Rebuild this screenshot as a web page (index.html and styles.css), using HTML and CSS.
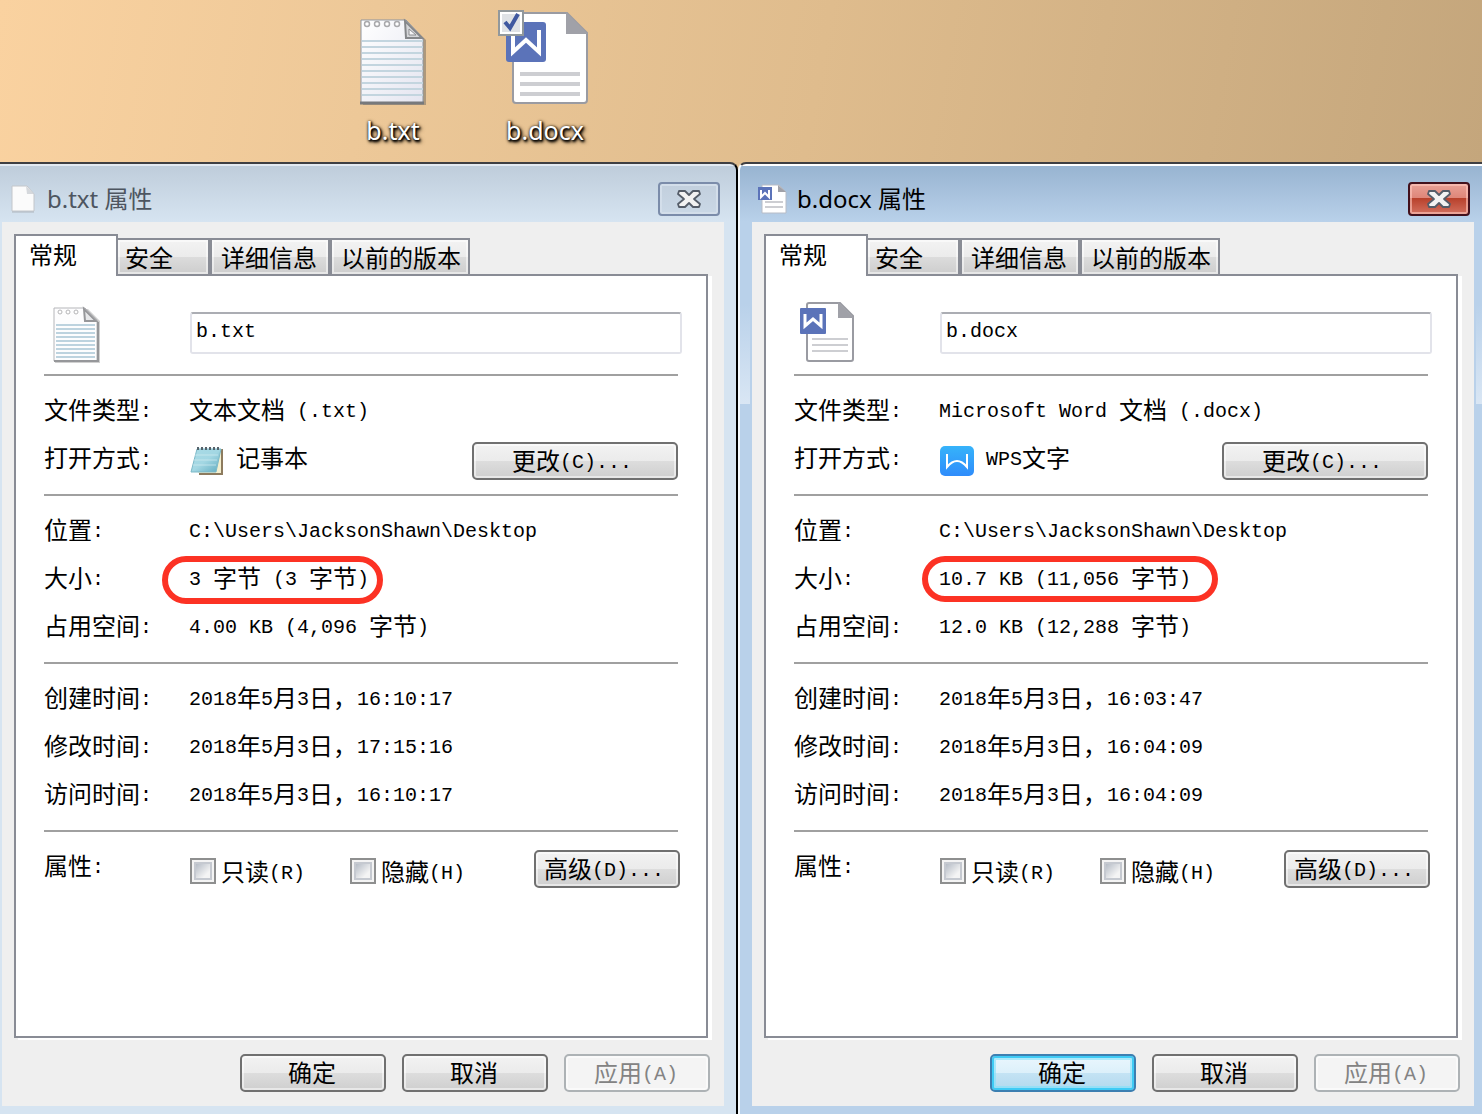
FILE: index.html
```html
<!DOCTYPE html>
<html lang="zh-CN">
<head>
<meta charset="utf-8">
<title>文件属性</title>
<link rel="stylesheet" href="styles.css">
</head>
<body>
<svg class="defs" aria-hidden="true">
  <defs>
    <linearGradient id="paper" x1="0" y1="0" x2="1" y2="1">
      <stop offset="0" stop-color="#ffffff"/><stop offset="1" stop-color="#e4e5f0"/>
    </linearGradient>
    <linearGradient id="pad" x1="0" y1="0" x2="1" y2="1">
      <stop offset="0" stop-color="#a9dbe6"/><stop offset="0.5" stop-color="#a3d7e3"/><stop offset="1" stop-color="#5fabbf"/>
    </linearGradient>
    <linearGradient id="wps" x1="0" y1="0" x2="0" y2="1">
      <stop offset="0" stop-color="#36b3fa"/><stop offset="1" stop-color="#2f8cfb"/>
    </linearGradient>
    <symbol id="close" viewBox="0 0 26 20">
      <path d="M3 2h6l4 4 4-4h6l1 3-6 5 6 5-1 3h-6l-4-4-4 4H3l-1-3 6-5-6-5z" fill="#f2f2f2" stroke="#545c68" stroke-width="1.800" stroke-linejoin="round"/>
    </symbol>
  </defs>
</svg>

<header class="desktop">
  <div class="file">
    <svg width="66" height="88" viewBox="0 0 66 88">
      <path d="M3 4h44l19 18v65H3z" fill="#6f6a62" opacity=".5"/>
      <path d="M1 2h45l17 18v65H1z" fill="url(#paper)" stroke="#8f959e" stroke-width="1"/>
      <path d="M2 23h61M2 29h61M2 35h61M2 41h61M2 47h61M2 53h61M2 59h61M2 65h61M2 71h61M2 77h61" stroke="#c3d5df" stroke-width="2"/>
      <path d="M0 85h64" stroke="#77797c" stroke-width="3"/>
      <path d="M45 3l17 17H46z" fill="#d5d6d9" stroke="#85878a" stroke-width="2"/>
      <path d="M49 11v6h7z" fill="#f5f5f7" stroke="#8c8d90" stroke-width="1"/>
      <g fill="#fff" stroke="#a9a9ac" stroke-width="1.500"><circle cx="7" cy="6" r="2.500"/><circle cx="17" cy="6" r="2.500"/><circle cx="27" cy="6" r="2.500"/><circle cx="37" cy="6" r="2.500"/></g>
    </svg>
    <span class="file-name">b.txt</span>
  </div>
  <div class="file">
    <svg width="94" height="96" viewBox="0 0 94 96">
      <path d="M18 3h51l20 20v67q0 3-3 3H18q-3 0-3-3V6q0-3 3-3z" fill="#fff" stroke="#9a9ba2" stroke-width="2"/>
      <path d="M68 2l22 22H68z" fill="#a0a1a8"/>
      <path d="M22 64h60M22 74h60M22 84h60" stroke="#cdced2" stroke-width="4"/>
      <rect x="8" y="12" width="40" height="40" rx="3" fill="#5b73b9"/>
      <path d="M15 24v18l13-12 13 12V20" fill="none" stroke="#fff" stroke-width="4"/>
      <rect x="1" y="1" width="24" height="24" fill="#fff" stroke="#91989c" stroke-width="2"/>
      <rect x="4" y="4" width="18" height="18" fill="#dfe2e6"/>
      <path d="M7 12l5 6 8-14" fill="none" stroke="#3f58a0" stroke-width="4"/>
    </svg>
    <span class="file-name">b.docx</span>
  </div>
</header>

<main class="windows">
  <section class="window inactive" aria-labelledby="t1">
    <header class="titlebar">
      <svg class="title-icon" width="30" height="30" viewBox="0 0 30 30">
        <path d="M5 2h15l7 8v17H5z" fill="#fbfbfb" stroke="#c3c6ca" stroke-width="1"/>
        <path d="M5 28h22" stroke="#aeb5bd"/>
        <path d="M19 2l8 8h-7z" fill="#d5d8dc"/>
      </svg>
      <h2 id="t1">b.txt 属性</h2>
      <button class="close" type="button" aria-label="关闭"><svg width="26" height="20"><use href="#close"/></svg></button>
    </header>
    <div class="client">
      <div class="tabs" role="tablist">
        <button class="tab t-general active" role="tab" aria-selected="true">常规</button>
        <button class="tab t-security" role="tab">安全</button>
        <button class="tab t-detail" role="tab">详细信息</button>
        <button class="tab t-previous" role="tab">以前的版本</button>
      </div>
      <div class="panel" role="tabpanel">
        <div class="head">
          <div class="head-icon">
            <svg width="62" height="64" viewBox="0 0 62 64">
              <path d="M11 9h33l12 12v42H11z" fill="#777" opacity=".35"/>
              <path d="M10 8h31l12 12v41H10z" fill="#fdfdfe" stroke="#b5b6b9" stroke-width="1"/>
              <path d="M12 25h39M12 29h39M12 33h39M12 37h39M12 41h39M12 45h39M12 49h39M12 53h39M12 57h39" stroke="#bdd3df" stroke-width="2"/>
              <path d="M10 61h44V22" fill="none" stroke="#96979a" stroke-width="2"/>
              <path d="M40 9l12 12H41z" fill="#e6e7e9" stroke="#96979a" stroke-width="2"/>
              <g fill="#fff" stroke="#b5b5b8"><circle cx="16" cy="12" r="2"/><circle cx="24" cy="12" r="2"/><circle cx="32" cy="12" r="2"/></g>
            </svg>
          </div>
          <input class="name" type="text" value="b.txt" aria-label="文件名">
        </div>
        <dl>
          <div class="row"><dt>文件类型<i>:</i></dt><dd>文本文档<i> (.txt)</i></dd></div>
          <div class="row"><dt>打开方式<i>:</i></dt>
            <dd class="app">
              <svg width="34" height="30" viewBox="0 0 34 30">
                <path d="M9 3h24v26H9z" fill="#8d7b5e"/><path d="M8 3h23v24H8z" fill="#f4efcf"/>
                <path d="M7 3h24l-5 23H1z" fill="url(#pad)" stroke="#7db9c8"/>
                <path d="M5 9h23M4 14h23M3 19h23" stroke="#d3edf2" stroke-width="1" opacity=".7"/>
                <path d="M8 1v3M12 1v3M16 1v3M20 1v3M24 1v3M28 1v3" stroke="#53626b" stroke-width="2"/>
              </svg>
              <span>记事本</span>
              <button class="btn change" type="button">更改<i>(C)...</i></button>
            </dd></div>
        </dl>
        <dl>
          <div class="row"><dt>位置<i>:</i></dt><dd><i>C:\Users\JacksonShawn\Desktop</i></dd></div>
          <div class="row"><dt>大小<i>:</i></dt><dd><span class="ringed ring-short"><i>3 </i>字节<i> (3 </i>字节<i>)</i></span></dd></div>
          <div class="row"><dt>占用空间<i>:</i></dt><dd><i>4.00 KB (4,096 </i>字节<i>)</i></dd></div>
        </dl>
        <dl>
          <div class="row"><dt>创建时间<i>:</i></dt><dd><i>2018</i>年<i>5</i>月<i>3</i>日，<i>16:10:17</i></dd></div>
          <div class="row"><dt>修改时间<i>:</i></dt><dd><i>2018</i>年<i>5</i>月<i>3</i>日，<i>17:15:16</i></dd></div>
          <div class="row"><dt>访问时间<i>:</i></dt><dd><i>2018</i>年<i>5</i>月<i>3</i>日，<i>16:10:17</i></dd></div>
        </dl>
        <dl>
          <div class="row"><dt>属性<i>:</i></dt>
            <dd class="attributes">
              <label><input type="checkbox"><span>只读<i>(R)</i></span></label>
              <label><input type="checkbox"><span>隐藏<i>(H)</i></span></label>
              <button class="btn advanced" type="button">高级<i>(D)...</i></button>
            </dd></div>
        </dl>
      </div>
      <footer class="actions">
        <button class="btn" type="button">确定</button>
        <button class="btn" type="button">取消</button>
        <button class="btn" type="button" disabled>应用<i>(A)</i></button>
      </footer>
    </div>
  </section>

  <section class="window focused" aria-labelledby="t2">
    <header class="titlebar">
      <svg class="title-icon" width="30" height="30" viewBox="0 0 30 30">
        <path d="M5 1h17l7 7v21H5z" fill="#fff" stroke="#b7bcc6" stroke-width="1"/>
        <path d="M21 1l8 7h-8z" fill="#a0a1a8"/>
        <path d="M8 18h18M8 23h18" stroke="#cdced2" stroke-width="2"/>
        <rect x="1" y="3" width="14" height="13" fill="#5b73b9"/>
        <path d="M4 6v7l4-4 4 4V6" fill="none" stroke="#fff" stroke-width="2"/>
      </svg>
      <h2 id="t2">b.docx 属性</h2>
      <button class="close" type="button" aria-label="关闭"><svg width="26" height="20"><use href="#close"/></svg></button>
    </header>
    <div class="client">
      <div class="tabs" role="tablist">
        <button class="tab t-general active" role="tab" aria-selected="true">常规</button>
        <button class="tab t-security" role="tab">安全</button>
        <button class="tab t-detail" role="tab">详细信息</button>
        <button class="tab t-previous" role="tab">以前的版本</button>
      </div>
      <div class="panel" role="tabpanel">
        <div class="head">
          <div class="head-icon">
            <svg width="62" height="64" viewBox="0 0 62 64">
              <path d="M15 3h31l13 13v43q0 2-2 2H15q-2 0-2-2V5q0-2 2-2z" fill="#fff" stroke="#9a9ba2" stroke-width="2"/>
              <path d="M44 2l16 16H44z" fill="#a0a1a8"/>
              <path d="M18 39h36M18 45h36M18 51h36" stroke="#cdced2" stroke-width="2"/>
              <rect x="6" y="8" width="26" height="26" rx="1" fill="#5b73b9"/>
              <path d="M11 14v12l8-7 8 7V14" fill="none" stroke="#fff" stroke-width="3"/>
            </svg>
          </div>
          <input class="name" type="text" value="b.docx" aria-label="文件名">
        </div>
        <dl>
          <div class="row"><dt>文件类型<i>:</i></dt><dd><i>Microsoft Word </i>文档<i> (.docx)</i></dd></div>
          <div class="row"><dt>打开方式<i>:</i></dt>
            <dd class="app">
              <svg width="34" height="30" viewBox="0 0 34 30">
                <rect width="34" height="30" rx="5" fill="url(#wps)"/>
                <path d="M7 8v13q10-12 20 0V8" fill="none" stroke="#fff" stroke-width="2"/>
              </svg>
              <span><i>WPS</i>文字</span>
              <button class="btn change" type="button">更改<i>(C)...</i></button>
            </dd></div>
        </dl>
        <dl>
          <div class="row"><dt>位置<i>:</i></dt><dd><i>C:\Users\JacksonShawn\Desktop</i></dd></div>
          <div class="row"><dt>大小<i>:</i></dt><dd><span class="ringed ring-long"><i>10.7 KB (11,056 </i>字节<i>)</i></span></dd></div>
          <div class="row"><dt>占用空间<i>:</i></dt><dd><i>12.0 KB (12,288 </i>字节<i>)</i></dd></div>
        </dl>
        <dl>
          <div class="row"><dt>创建时间<i>:</i></dt><dd><i>2018</i>年<i>5</i>月<i>3</i>日，<i>16:03:47</i></dd></div>
          <div class="row"><dt>修改时间<i>:</i></dt><dd><i>2018</i>年<i>5</i>月<i>3</i>日，<i>16:04:09</i></dd></div>
          <div class="row"><dt>访问时间<i>:</i></dt><dd><i>2018</i>年<i>5</i>月<i>3</i>日，<i>16:04:09</i></dd></div>
        </dl>
        <dl>
          <div class="row"><dt>属性<i>:</i></dt>
            <dd class="attributes">
              <label><input type="checkbox"><span>只读<i>(R)</i></span></label>
              <label><input type="checkbox"><span>隐藏<i>(H)</i></span></label>
              <button class="btn advanced" type="button">高级<i>(D)...</i></button>
            </dd></div>
        </dl>
      </div>
      <footer class="actions">
        <button class="btn default" type="button">确定</button>
        <button class="btn" type="button">取消</button>
        <button class="btn" type="button" disabled>应用<i>(A)</i></button>
      </footer>
    </div>
  </section>
</main>
</body>
</html>
```
FILE: styles.css
```css
*, *::after { box-sizing: border-box; }

body {
  margin: 0;
  min-height: 100vh;
  display: flex;
  flex-direction: column;
  background: linear-gradient(100deg, #fad2a0 0, #edc898 25%, #dfbc8d 55%, #c4a67c 100%) 0 0 / 100% 172px no-repeat #efefef;
  color: #000;
  font: 24px/46px "Noto Sans CJK SC", sans-serif;
}

button, input { font: inherit; color: inherit; margin: 0; }
svg { display: block; flex: none; }
.defs { position: absolute; width: 0; height: 0; }

/* half-width characters: 12px wide beside 24px ideographs */
i {
  font: 20px "Liberation Mono", monospace;
  vertical-align: 2px;
  white-space: pre;
}

/* desktop */
.desktop {
  display: flex;
  height: 162px;
  padding-left: 317px;
}
.file {
  display: flex;
  flex-direction: column;
  justify-content: flex-end;
  align-items: center;
  width: 152px;
  height: 148px;
}
.file-name {
  margin-top: 6px;
  font: 25px/36px "Noto Sans", sans-serif;
  color: #fff;
  text-shadow: 1px 1px 2px #000, 1px 2px 3px #000, 0 0 3px #4a3820, 2px 2px 4px #4a3820;
}

/* windows */
.windows {
  flex: 1;
  display: grid;
  grid-template-columns: 123fr 124fr;
}
.window {
  display: flex;
  flex-direction: column;
  min-width: 0;
  border-top: 2px solid #3f3f42;
}
.inactive {
  padding: 0 12px 8px 2px;
  border-right: 2px solid #000;
  border-radius: 0 8px 0 0;
  background: linear-gradient(#e3eaf2 2px, #bfcddb 2px, #d6e4f1 58px);
}
.focused {
  padding: 0 8px 8px 12px;
  border-left: 2px solid #f4f9fd;
  border-radius: 8px 0 0 0;
  background:
    linear-gradient(#b9d1ea, #d9e6f4) 0 140px / 10px 100px no-repeat,
    linear-gradient(#b9d1ea, #d9e6f4) 100% 140px / 6px 100px no-repeat,
    linear-gradient(#fff 2px, #98b4d1 2px, #b9d1ea 58px);
}
.titlebar {
  display: flex;
  align-items: flex-start;
  height: 58px;
  padding: 18px 4px 0 5px;
}
.title-icon { margin-top: 2px; }
.titlebar h2 {
  flex: 1;
  margin: 0 0 0 10px;
  font: 24px/34px "Noto Sans", "Noto Sans CJK SC", sans-serif;
}
.inactive h2 { color: #4d5560; }
.close {
  display: grid;
  place-items: center;
  width: 62px;
  height: 34px;
  padding: 0;
  border: 2px solid #7b8caa;
  border-radius: 4px;
  background: linear-gradient(#c2cfdd, #cad8e6);
  box-shadow: inset 0 0 0 2px #d3deea;
}
.focused .close {
  border-color: #43111c;
  background: linear-gradient(#e9a196, #de8578 48%, #b8412c 48%, #d3705e);
  box-shadow: inset 0 0 0 2px rgba(255, 200, 190, 0.6);
}

.client {
  flex: 1;
  display: flex;
  flex-direction: column;
  padding: 12px 12px 14px;
  background: #efefef;
}

/* tabs */
.tabs {
  position: relative;
  display: flex;
  align-items: flex-end;
  margin-bottom: -2px;
}
.tab {
  height: 38px;
  padding: 0 0 0 9px;
  border: 2px solid #898c95;
  background: linear-gradient(#f3f3f3, #ebebeb 50%, #dcdcdc 50%, #cdcdcd);
  box-shadow: inset 0 0 0 2px rgba(255, 255, 255, 0.5);
  line-height: 34px;
  text-align: left;
  white-space: nowrap;
}
.tab.active {
  height: 42px;
  padding: 0 0 4px 13px;
  border-bottom: 0;
  background: #fff;
  box-shadow: none;
}
.t-general { width: 104px; }
.t-security { width: 92px; padding-left: 7px; border-left: 0; }
.t-detail { width: 120px; }
.t-previous { width: 140px; }

/* property sheet */
.panel {
  flex: 1;
  margin-right: 4px;
  padding: 0 28px;
  border: 2px solid #898c95;
  background: #fff;
  box-shadow: 4px 2px 0 #fff;
}
.head {
  display: flex;
  align-items: flex-start;
  height: 98px;
}
.head-icon { width: 146px; padding-top: 24px; }
.name {
  flex: 1;
  min-width: 0;
  height: 42px;
  margin: 36px -4px 0 0;
  padding: 0 4px 4px;
  border: 2px solid #e2e3ea;
  border-top-color: #abadb3;
  border-radius: 3px;
  background: #fff;
  font: 20px "Liberation Mono", monospace;
}
dl {
  margin: 0;
  padding: 10px 0 12px;
  border-top: 2px solid #a0a0a0;
}
.row {
  display: flex;
  height: 48px;
  white-space: nowrap;
}
dt { width: 145px; flex: none; }
dd { flex: 1; margin: 0; }
.app { display: flex; align-items: flex-start; }
.app svg { margin: 12px 12px 0 1px; }
.attributes { display: flex; align-items: flex-start; padding-left: 1px; }
.attributes label {
  display: flex;
  align-items: center;
  gap: 5px;
  width: 160px;
  height: 26px;
  margin-top: 16px;
}
.attributes input {
  appearance: none;
  flex: none;
  width: 26px;
  height: 26px;
  border: 2px solid #8e8f8f;
  background: linear-gradient(135deg, #b5bcc6, #f4f4f4 75%) content-box #f4f4f4;
  padding: 4px;
  box-shadow: inset 0 0 0 2px #f4f4f4, inset 0 0 0 4px #c5c9d0;
}

.ringed { position: relative; display: inline-block; }
.ringed::after {
  content: "";
  position: absolute;
  top: 2px;
  height: 48px;
  border: 6px solid #fc3224;
  border-radius: 24px;
}
.ring-short::after { left: -27px; right: -14px; }
.ring-long::after { left: -17px; right: -27px; height: 46px; }

/* push buttons */
.btn {
  width: 146px;
  height: 38px;
  padding: 0 2px 2px 0;
  border: 2px solid #707070;
  border-radius: 5px;
  background: linear-gradient(#f2f2f2, #ebebeb 50%, #dddddd 50%, #cfcfcf);
  box-shadow: inset 0 0 0 2px rgba(255, 255, 255, 0.5);
  line-height: 32px;
  white-space: nowrap;
}
.btn.default {
  border-color: #3c7fb1;
  background: linear-gradient(#eaf6fd, #dcf0fa 50%, #c4e3f4 50%, #b2d9ee);
  box-shadow: inset 0 0 0 2px #3fcbf5, inset 0 0 0 4px rgba(130, 225, 250, 0.6);
}
.btn:disabled {
  border-color: #adb2b5;
  background: #f4f4f4;
  color: #838383;
}
.change { width: 206px; margin: 8px 0 0 auto; padding-right: 6px; }
.advanced { margin: 8px -2px 0 auto; padding-right: 6px; }
.actions {
  display: flex;
  justify-content: flex-end;
  gap: 16px;
  padding: 16px 2px 0 0;
}
```
